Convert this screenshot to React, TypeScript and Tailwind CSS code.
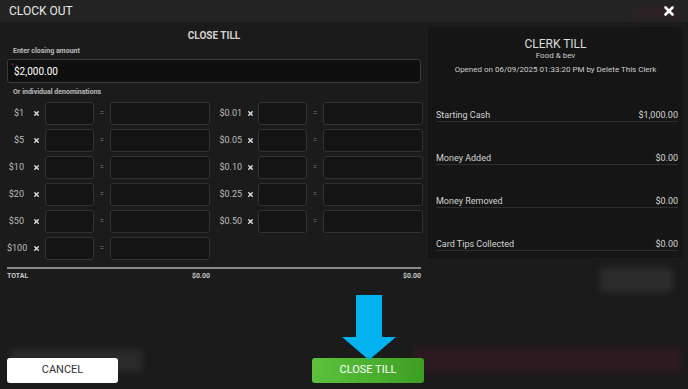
import { X } from 'lucide-react';

const leftDenoms = ['$1', '$5', '$10', '$20', '$50', '$100'];
const rightDenoms = ['$0.01', '$0.05', '$0.10', '$0.25', '$0.50'];

const summary = [
  { label: 'Starting Cash', value: '$1,000.00' },
  { label: 'Money Added', value: '$0.00' },
  { label: 'Money Removed', value: '$0.00' },
  { label: 'Card Tips Collected', value: '$0.00' },
];

function Box({ w }: { w: string }) {
  return <div className={`${w} h-[23px] rounded-[3px] border border-[#333] bg-[#141414]`} />;
}

function DenomRow({ label, wide }: { label: string; wide?: boolean }) {
  return (
    <div className="flex items-center">
      <span className={`${wide ? 'w-[32px]' : 'w-[17px]'} text-right text-[9px] text-[#bdbdbd]`}>{label}</span>
      <span className={`${wide ? 'w-[16px]' : 'w-[21px] pl-1'} flex justify-center`}>
        <X className="w-[7px] h-[7px] text-[#d8d8d8]" strokeWidth={5} />
      </span>
      <Box w="w-[49px]" />
      <span className="w-[16px] text-center text-[7px] text-[#888]">=</span>
      <Box w="w-[100px]" />
    </div>
  );
}

export default function App() {
  return (
    <div
      className="relative w-[688px] h-[389px] overflow-hidden bg-[#1b1b1b] flex flex-col"
      style={{ fontFamily: 'Roboto, "Liberation Sans", sans-serif' }}
    >
      {/* Header */}
      <div className="relative h-[22px] bg-[#232323] flex items-center justify-between pl-[9px] pr-[12px] shrink-0">
        <span className="text-[12px] text-[#e8e8e8] leading-none">CLOCK OUT</span>
        <div className="absolute right-[8px] top-[6px] w-[48px] h-[14px] rounded bg-[#3a1f26] opacity-40 blur-[2px]" />
        <X className="relative w-[14px] h-[14px] text-white" strokeWidth={4.5} />
      </div>

      <div className="flex flex-1">
        {/* Left panel */}
        <div className="w-[428px] px-[7px] flex flex-col">
          <div className="mt-[9px] text-center text-[10px] font-bold text-[#d0d0d0] leading-none">CLOSE TILL</div>
          <div className="mt-[7px] pl-[6px] text-[7px] font-bold text-[#bbb] leading-none">Enter closing amount</div>
          <div className="relative mt-[4px] h-[24px] rounded-[3px] border border-[#3c3c3c] bg-[#0f0f0f] flex items-center pl-[6px]">
            <span className="absolute left-[3px] top-[3px] text-[5px] text-[#e0245e] leading-none">*</span>
            <span className="text-[10px] text-white">$2,000.00</span>
          </div>
          <div className="mt-[6px] pl-[6px] text-[7px] font-bold text-[#bbb] leading-none">Or individual denominations</div>

          <div className="mt-[6px] flex">
            <div className="flex flex-col gap-[4px]">
              {leftDenoms.map((d) => (
                <DenomRow key={d} label={d} />
              ))}
            </div>
            <div className="flex flex-col gap-[4px]">
              {rightDenoms.map((d) => (
                <DenomRow key={d} label={d} wide />
              ))}
            </div>
          </div>

          <div className="mt-[7px] h-[2px] bg-[#8a8a8a]" />
          <div className="mt-[4px] flex text-[7px] font-bold text-[#c8c8c8] leading-none">
            <span className="w-[203px] flex justify-between">
              <span>TOTAL</span>
              <span>$0.00</span>
            </span>
            <span className="flex-1 text-right">$0.00</span>
          </div>
        </div>

        {/* Right panel */}
        <div className="mt-[5px] w-[255px] h-[231px] bg-[#151515] flex flex-col">
          <div className="mt-[11px] text-center text-[12px] text-[#dcdcdc] leading-none">CLERK TILL</div>
          <div className="mt-[2px] text-center text-[8px] text-[#cfcfcf] leading-none">Food &amp; bev</div>
          <div className="mt-[6px] text-center text-[8px] text-[#cfcfcf] leading-none">
            Opened on 06/09/2025 01:33:20 PM by Delete This Clerk
          </div>
          <div className="mt-[37px] flex flex-col gap-[32px] pl-[8px] pr-[5px]">
            {summary.map((s) => (
              <div key={s.label} className="flex justify-between border-b border-[#2e2e2e] pb-[1px] text-[9px] text-[#d4d4d4] leading-[9px]">
                <span>{s.label}</span>
                <span>{s.value}</span>
              </div>
            ))}
          </div>
        </div>
      </div>

      {/* Faded background controls */}
      <div className="absolute left-[600px] top-[268px] w-[73px] h-[24px] rounded bg-[#2c2c2c] blur-[3px]" />
      <div className="absolute left-[413px] top-[347px] w-[268px] h-[26px] rounded bg-[#2c1a20] blur-[3px]" />
      <div className="absolute left-[10px] top-[349px] w-[133px] h-[23px] rounded bg-[#2a2a2a] blur-[3px]" />

      {/* Footer buttons */}
      <div className="relative h-[31px] px-[7px] flex items-start justify-between shrink-0" style={{ width: 431 }}>
        <button className="w-[111px] h-[25px] rounded-[3px] bg-white text-[11px] text-[#333]">CANCEL</button>
        <button className="w-[112px] h-[25px] rounded-[3px] bg-gradient-to-r from-[#5cc23d] to-[#3c9f22] text-[11px] text-white">
          CLOSE TILL
        </button>
      </div>

      {/* Pointer arrow */}
      <svg className="absolute left-[342px] top-[295px]" width="55" height="66" viewBox="0 0 55 66">
        <polygon points="14,0 40,0 40,42 54,42 27,65 0,42 14,42" fill="#02b3f0" />
      </svg>
    </div>
  );
}
